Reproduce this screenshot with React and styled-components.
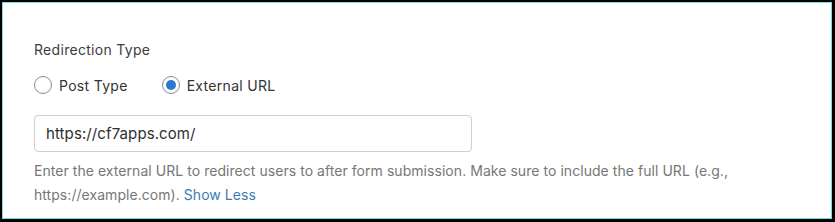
import React, { useState } from "react";
import styled, { createGlobalStyle } from "styled-components";

const Global = createGlobalStyle`
  html, body {
    margin: 0;
    padding: 0;
    background: #000;
  }
  body {
    width: 835px;
    height: 222px;
    overflow: hidden;
  }
`;

const Frame = styled.div`
  box-sizing: border-box;
  width: 835px;
  height: 222px;
  background: #000;
  padding: 2px 3px 3px 2px;
`;

const Panel = styled.div`
  box-sizing: border-box;
  height: 100%;
  background: #fff;
  border: 1px solid #6fe0e2;
  padding: 39px 31px 0 31px;
  font-family: Inter, "Open Sans", sans-serif;
`;

const Label = styled.div`
  font-size: 14px;
  color: #3c3c3c;
  line-height: 16px;
  letter-spacing: 0.3px;
`;

const RadioRow = styled.div`
  display: flex;
  align-items: center;
  gap: 34px;
  margin-top: 18px;
`;

const RadioOption = styled.label`
  display: flex;
  align-items: center;
  gap: 7px;
  font-size: 14px;
  color: #333;
  cursor: pointer;
  letter-spacing: 0.3px;
`;

const Circle = styled.span`
  box-sizing: border-box;
  width: 18px;
  height: 18px;
  border-radius: 50%;
  border: 1px solid #8c8c8c;
  display: flex;
  align-items: center;
  justify-content: center;
  &::after {
    content: "";
    width: 10px;
    height: 10px;
    border-radius: 50%;
    background: #2a7bd0;
    display: ${(p) => (p.$on ? "block" : "none")};
  }
`;

const UrlInput = styled.input`
  box-sizing: border-box;
  display: block;
  width: 438px;
  height: 37px;
  margin-top: 21px;
  border: 1px solid #cfcfcf;
  border-radius: 4px;
  padding: 0 11px;
  font-family: Inter, "Open Sans", sans-serif;
  font-size: 15px;
  letter-spacing: 0.1px;
  color: #2f2f2f;
  outline: none;
`;

const Help = styled.p`
  margin: 7px 0 0;
  font-size: 14px;
  line-height: 24px;
  color: #777;
  letter-spacing: 0.05px;
  max-width: 730px;
`;

const Toggle = styled.a`
  color: #3b7ab5;
  text-decoration: none;
  cursor: pointer;
`;

export default function App() {
  const [type, setType] = useState("external");
  const [url, setUrl] = useState("https://cf7apps.com/");

  return (
    <Frame>
      <Global />
      <Panel>
        <Label>Redirection Type</Label>
        <RadioRow>
          <RadioOption onClick={() => setType("post")}>
            <Circle $on={type === "post"} />
            Post Type
          </RadioOption>
          <RadioOption onClick={() => setType("external")}>
            <Circle $on={type === "external"} />
            External URL
          </RadioOption>
        </RadioRow>
        <UrlInput value={url} onChange={(e) => setUrl(e.target.value)} />
        <Help>
          Enter the external URL to redirect users to after form submission.
          Make sure to include the full URL (e.g., https://example.com).{" "}
          <Toggle>Show Less</Toggle>
        </Help>
      </Panel>
    </Frame>
  );
}
